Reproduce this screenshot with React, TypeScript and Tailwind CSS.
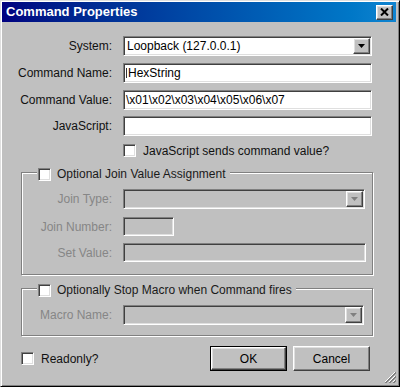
import React from "react";

const sunken =
  "border border-t-[#808080] border-l-[#808080] border-r-white border-b-white shadow-[inset_1px_1px_0_#404040,inset_-1px_-1px_0_#dfdfdf]";
const raised =
  "border border-t-white border-l-white border-r-[#404040] border-b-[#404040] shadow-[inset_-1px_-1px_0_#808080,inset_1px_1px_0_#dfdfdf]";
const etched =
  "border border-[#808080] shadow-[inset_1px_1px_0_#fff,1px_1px_0_#fff]";

function Arrow({ disabled }: { disabled?: boolean }) {
  return (
    <svg width="7" height="4" viewBox="0 0 7 4">
      <polygon points="0,0 7,0 3.5,4" fill={disabled ? "#808080" : "#000"} />
    </svg>
  );
}

function Checkbox() {
  return <div className={`w-[13px] h-[13px] shrink-0 bg-white ${sunken}`} />;
}

function Select({ value, width, disabled }: { value?: string; width: string; disabled?: boolean }) {
  return (
    <div className={`${width} h-[20px] p-[1px] flex ${sunken} ${disabled ? "bg-[#c0c0c0]" : "bg-white"}`}>
      <div className="flex-1 pl-[2px] leading-[16px] text-black">{value}</div>
      <div className={`w-[17px] h-[16px] flex items-center justify-center bg-[#c0c0c0] ${raised}`}>
        <Arrow disabled={disabled} />
      </div>
    </div>
  );
}

function Input({ value, width, height, disabled, caret }: { value?: string; width: string; height: string; disabled?: boolean; caret?: boolean }) {
  return (
    <div className={`${width} ${height} flex items-center pl-[2px] ${sunken} ${disabled ? "bg-[#c0c0c0]" : "bg-white"}`}>
      {caret && <span className="w-[1px] h-[10px] bg-[#333] mr-[1px]" />}
      <span className="leading-[16px] text-black whitespace-nowrap">{value}</span>
    </div>
  );
}

function Row({ label, labelW, disabled, children, className }: { label: string; labelW: string; disabled?: boolean; children: React.ReactNode; className?: string }) {
  return (
    <div className={`flex items-center ${className ?? ""}`}>
      <div className={`${labelW} text-right ${disabled ? "text-[#868686]" : "text-[#111]"}`}>{label}</div>
      <div className="ml-[11px]">{children}</div>
    </div>
  );
}

export default function App() {
  return (
    <div
      className="relative w-[400px] h-[387px] flex flex-col bg-[#c0c0c0] border border-t-[#dfdfdf] border-l-[#dfdfdf] border-r-black border-b-black shadow-[inset_1px_1px_0_#fff,inset_-1px_-1px_0_#808080] p-[1px] pr-[3px] text-[12px] leading-[14px] overflow-hidden"
      style={{ fontFamily: '"Liberation Sans", Arial, sans-serif' }}
    >
      {/* title bar */}
      <div className="h-[20px] flex items-center justify-between bg-gradient-to-r from-[#000080] to-[#1084d0] pl-[4px] pr-[3px]">
        <span className="text-white font-bold text-[13px]">Command Properties</span>
        <div className={`w-[17px] h-[15px] flex items-center justify-center bg-[#c0c0c0] ${raised}`}>
          <svg width="9" height="8" viewBox="0 0 9 8">
            <path d="M1 0.5 L8 7.5 M8 0.5 L1 7.5" stroke="#000" strokeWidth="2" />
          </svg>
        </div>
      </div>

      <div className="flex flex-col">
        <Row label="System:" labelW="w-[110px]" className="mt-[14px]">
          <Select value="Loopback (127.0.0.1)" width="w-[249px]" />
        </Row>
        <Row label="Command Name:" labelW="w-[110px]" className="mt-[7px]">
          <Input value="HexString" width="w-[249px]" height="h-[20px]" caret />
        </Row>
        <Row label="Command Value:" labelW="w-[110px]" className="mt-[7px]">
          <Input value="\x01\x02\x03\x04\x05\x06\x07" width="w-[249px]" height="h-[20px]" />
        </Row>
        <Row label="JavaScript:" labelW="w-[110px]" className="mt-[6px]">
          <Input width="w-[249px]" height="h-[20px]" />
        </Row>
        <div className="mt-[8px] ml-[121px] flex items-center gap-[7px] h-[13px]">
          <Checkbox />
          <span className="text-[#111]">JavaScript sends command value?</span>
        </div>

        {/* group 1 */}
        <div className={`relative mt-[15px] ml-[19px] w-[352px] pt-[16px] pb-[12px] ${etched}`}>
          <div className="absolute left-[15px] top-[-6px] flex items-center gap-[6px] bg-[#c0c0c0] pl-[1px] pr-[4px]">
            <Checkbox />
            <span className="text-[#1a1a1a]">Optional Join Value Assignment</span>
          </div>
          <Row label="Join Type:" labelW="w-[90px]" disabled>
            <Select width="w-[242px]" disabled />
          </Row>
          <Row label="Join Number:" labelW="w-[90px]" disabled className="mt-[8px]">
            <Input width="w-[51px]" height="h-[19px]" disabled />
          </Row>
          <Row label="Set Value:" labelW="w-[90px]" disabled className="mt-[7px]">
            <Input width="w-[243px]" height="h-[19px]" disabled />
          </Row>
        </div>

        {/* group 2 */}
        <div className={`relative mt-[13px] ml-[19px] w-[352px] pt-[16px] pb-[10px] ${etched}`}>
          <div className="absolute left-[15px] top-[-6px] flex items-center gap-[6px] bg-[#c0c0c0] pl-[1px] pr-[4px]">
            <Checkbox />
            <span className="text-[#1a1a1a]">Optionally Stop Macro when Command fires</span>
          </div>
          <Row label="Macro Name:" labelW="w-[90px]" disabled>
            <Select width="w-[241px]" disabled />
          </Row>
        </div>

        {/* bottom row */}
        <div className="mt-[10px] flex items-center h-[25px]">
          <div className="ml-[19px] flex items-center gap-[7px]">
            <Checkbox />
            <span className="text-[#111]">Readonly?</span>
          </div>
          <div className="ml-auto mr-[26px] flex gap-[6px]">
            <div className="w-[77px] h-[25px] border border-black">
              <div className={`w-full h-full flex items-center justify-center text-black ${raised}`}>OK</div>
            </div>
            <div className={`w-[77px] h-[25px] flex items-center justify-center text-black ${raised}`}>Cancel</div>
          </div>
        </div>
      </div>

      {/* resize grip */}
      <svg className="absolute right-[3px] bottom-[3px]" width="12" height="12" viewBox="0 0 12 12">
        <path d="M11 1 L1 11 M11 5 L5 11 M11 9 L9 11" stroke="#fff" strokeWidth="1" />
        <path d="M12 1 L1 12 M12 2 L2 12 M12 5 L5 12 M12 6 L6 12 M12 9 L9 12 M12 10 L10 12" stroke="#808080" strokeWidth="1" />
      </svg>
    </div>
  );
}
